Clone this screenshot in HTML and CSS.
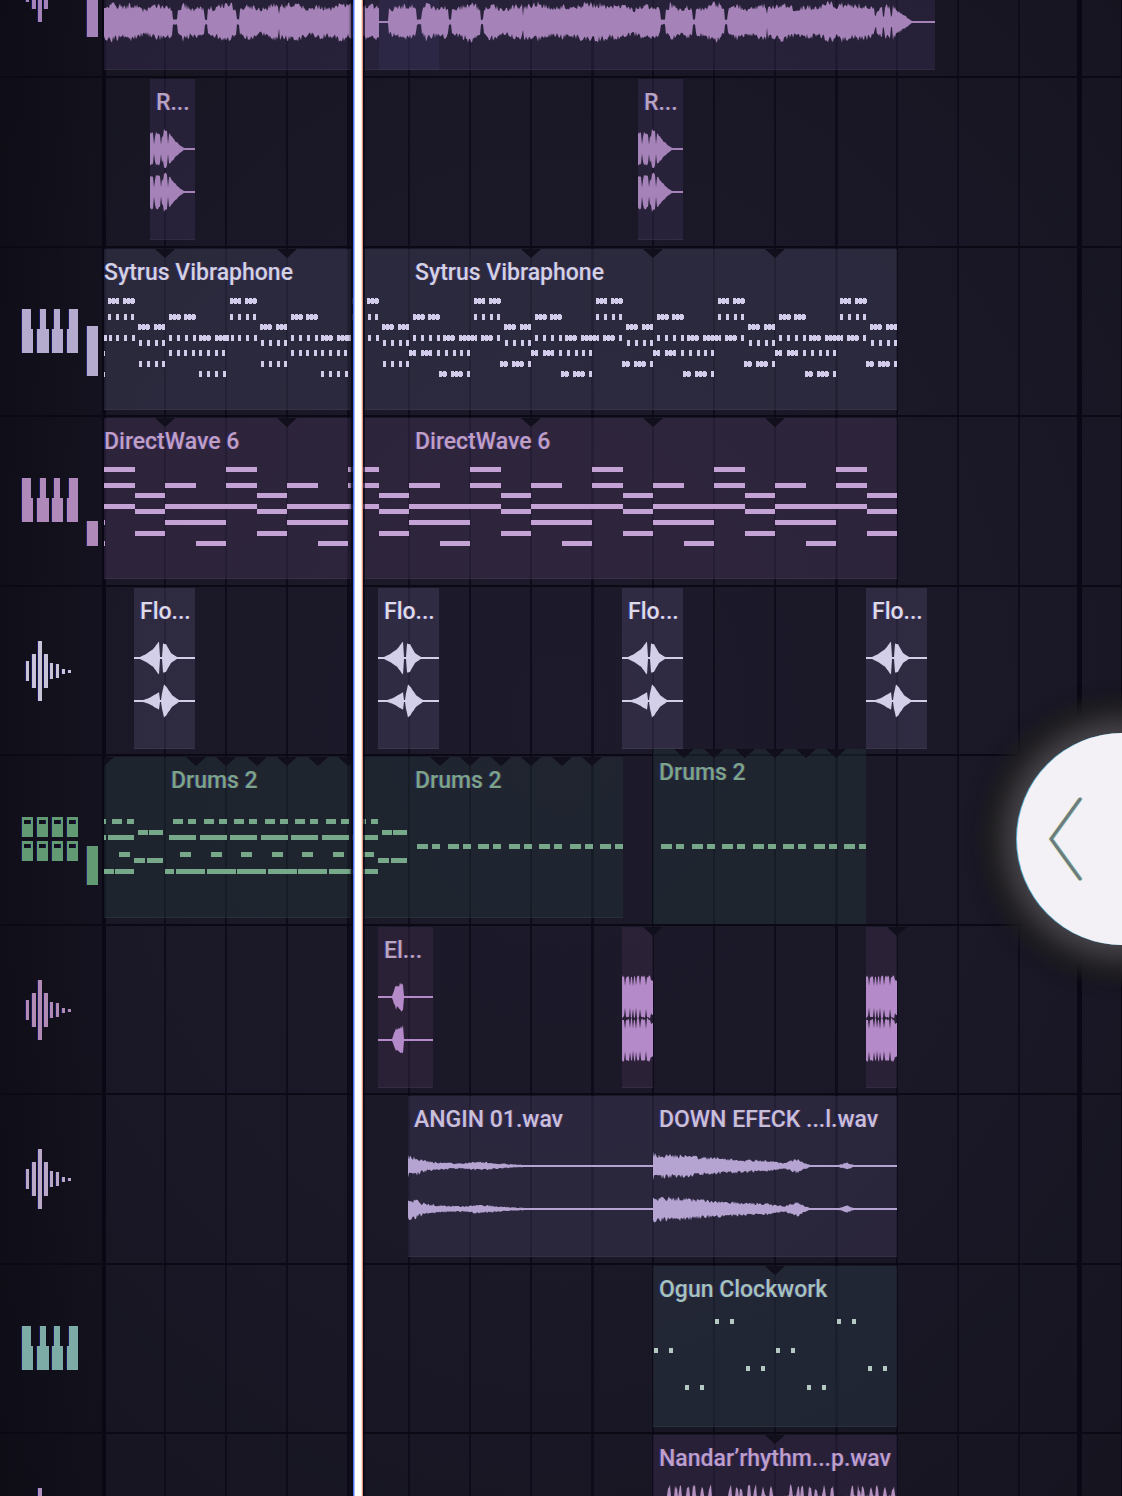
FILE: index.html
```html
<!DOCTYPE html>
<html lang="en">
<head>
<meta charset="utf-8">
<meta name="viewport" content="width=device-width, initial-scale=1">
<title>Playlist</title>
<link rel="stylesheet" href="styles.css">
</head>
<body>
<svg class="defs" aria-hidden="true">
  <symbol id="icon-keys" viewBox="0 0 56 44">
    <path d="M0 0h9v20h2v24H0zM18 0h6v20h3v24H15V20h3zM32 0h6v20h3v24H30V20h2zM47 0h9v44H45V20h2z"/>
  </symbol>
  <symbol id="icon-wave" viewBox="0 0 56 60">
    <path d="M4 20h3v20H4zM10 13h4v34h-4zM16 0h4v60h-4zM22 13h4v34h-4zM28 22h3v16h-3zM34 23h3v14h-3zM40 28h3v5h-3zM46 29h3v3h-3z"/>
  </symbol>
  <symbol id="icon-pads" viewBox="0 0 56 44">
    <path fill-rule="evenodd" d="M0 0h11v20H0zm2 3v4h7V3zM15 0h11v20H15zm2 3v4h7V3zM30 0h11v20H30zm2 3v4h7V3zM45 0h11v20H45zm2 3v4h7V3zM0 24h11v20H0zm2 3v4h7v-4zM15 24h11v20H15zm2 3v4h7v-4zM30 24h11v20H30zm2 3v4h7v-4zM45 24h11v20H45zm2 3v4h7v-4z"/>
  </symbol>
</svg>
<main class="viewport">
  <div class="playlist">
    <section class="track tone-lilac">
      <header class="track-head"><svg class="icon icon-tall"><use href="#icon-wave"/></svg><span class="meter" style="height:80px"></span></header>
      <div class="lane">
        <span class="fade" style="left:277px;width:60px"></span>
        <article class="clip" style="left:2px;width:275px"><svg class="data" data-wave="vocal"></svg></article>
        <article class="clip" style="left:277px;width:556px"><svg class="data" data-wave="vocalTail"></svg></article>
      </div>
    </section>

    <section class="track tone-lilac">
      <header class="track-head"></header>
      <div class="lane">
        <article class="clip" style="left:48px;width:45px"><h2 class="label">R...</h2><svg class="data" data-wave="riser"></svg></article>
        <article class="clip" style="left:536px;width:45px"><h2 class="label">R...</h2><svg class="data" data-wave="riser"></svg></article>
      </div>
    </section>

    <section class="track tone-silver">
      <header class="track-head"><svg class="icon"><use href="#icon-keys"/></svg><span class="meter" style="height:50px"></span></header>
      <div class="lane">
        <article class="clip flush" style="left:2px;width:305px"><h2 class="label">Sytrus Vibraphone</h2><svg class="data" data-notes="vibraphoneIntro" data-cuts="61,183"></svg></article>
        <article class="clip" style="left:307px;width:488px"><h2 class="label">Sytrus Vibraphone</h2><svg class="data" data-notes="vibraphone" data-cuts="122,244,366"></svg></article>
      </div>
    </section>

    <section class="track tone-orchid">
      <header class="track-head"><svg class="icon"><use href="#icon-keys"/></svg><span class="meter" style="height:25px"></span></header>
      <div class="lane">
        <article class="clip flush" style="left:2px;width:305px"><h2 class="label">DirectWave 6</h2><svg class="data" data-notes="directwave" data-shift="0" data-cuts="61,183"></svg></article>
        <article class="clip" style="left:307px;width:488px"><h2 class="label">DirectWave 6</h2><svg class="data" data-notes="directwave" data-shift="61" data-cuts="122,244,366"></svg></article>
      </div>
    </section>

    <section class="track tone-white">
      <header class="track-head"><svg class="icon icon-tall"><use href="#icon-wave"/></svg></header>
      <div class="lane">
        <article class="clip" style="left:32px;width:61px"><h2 class="label">Flo...</h2><svg class="data" data-wave="floor"></svg></article>
        <article class="clip" style="left:276px;width:61px"><h2 class="label">Flo...</h2><svg class="data" data-wave="floor"></svg></article>
        <article class="clip" style="left:520px;width:61px"><h2 class="label">Flo...</h2><svg class="data" data-wave="floor"></svg></article>
        <article class="clip" style="left:764px;width:61px"><h2 class="label">Flo...</h2><svg class="data" data-wave="floor"></svg></article>
      </div>
    </section>

    <section class="track tone-green">
      <header class="track-head"><svg class="icon"><use href="#icon-pads"/></svg><span class="meter" style="height:39px"></span></header>
      <div class="lane">
        <article class="clip" style="left:2px;width:30px"><svg class="data" data-notes="drumsHead" data-cuts="0"></svg></article>
        <article class="clip" style="left:32px;width:31px"><svg class="data" data-notes="drumsFill"></svg></article>
        <article class="clip" style="left:63px;width:213px"><h2 class="label">Drums 2</h2><svg class="data" data-notes="drums" data-cuts="31,61,92,122,153,183"></svg></article>
        <article class="clip" style="left:276px;width:31px"><svg class="data" data-notes="drumsFill"></svg></article>
        <article class="clip" style="left:307px;width:214px"><h2 class="label">Drums 2</h2><svg class="data" data-notes="hats" data-cuts="31,61,92,122,153,183"></svg></article>
        <article class="clip lifted" style="left:551px;width:213px"><h2 class="label">Drums 2</h2><svg class="data" data-notes="hatsLifted" data-cuts="31,61,92,122,153,183"></svg></article>
      </div>
    </section>

    <section class="track tone-plum">
      <header class="track-head"><svg class="icon icon-tall"><use href="#icon-wave"/></svg></header>
      <div class="lane">
        <article class="clip" style="left:276px;width:55px"><h2 class="label">El...</h2><svg class="data" data-wave="electro"></svg></article>
        <article class="clip" style="left:520px;width:31px"><svg class="data cut-over" data-wave="solid" data-cuts="31"></svg></article>
        <article class="clip" style="left:764px;width:31px"><svg class="data cut-over" data-wave="solid" data-cuts="31"></svg></article>
      </div>
    </section>

    <section class="track tone-lavender">
      <header class="track-head"><svg class="icon icon-tall"><use href="#icon-wave"/></svg></header>
      <div class="lane">
        <article class="clip" style="left:306px;width:245px"><h2 class="label">ANGIN 01.wav</h2><svg class="data" data-wave="wind"></svg></article>
        <article class="clip" style="left:551px;width:244px"><h2 class="label">DOWN EFECK ...l.wav</h2><svg class="data" data-wave="down"></svg></article>
      </div>
    </section>

    <section class="track tone-teal">
      <header class="track-head"><svg class="icon"><use href="#icon-keys"/></svg></header>
      <div class="lane">
        <article class="clip" style="left:551px;width:244px"><h2 class="label">Ogun Clockwork</h2><svg class="data" data-notes="clockwork" data-cuts="122"></svg></article>
      </div>
    </section>

    <section class="track tone-violet">
      <header class="track-head"><svg class="icon icon-tall"><use href="#icon-wave"/></svg></header>
      <div class="lane">
        <article class="clip" style="left:551px;width:244px"><h2 class="label">Nandar’rhythm...p.wav</h2><svg class="data" data-wave="rhythm" data-cuts="122"></svg></article>
      </div>
    </section>
  </div>
  <div class="playhead"></div>
  <button class="drawer" type="button" aria-label="Open side panel">
    <svg class="chevron" viewBox="0 0 36 84" aria-hidden="true">
      <path class="fringe-warm" d="M31 2 2 42l29 40"/>
      <path class="fringe-cool" d="M33 2 4 42l29 40"/>
      <path d="M32 2 3 42l29 40"/>
    </svg>
  </button>
</main>
<script src="playlist.js"></script>
</body>
</html>
```
FILE: styles.css
```css
* { box-sizing: border-box; }

body {
  margin: 0;
  background: #14131d;
  font-family: Roboto, "Liberation Sans", sans-serif;
}

.defs { position: absolute; width: 0; height: 0; }

.viewport {
  position: relative;
  height: 100vh;
  overflow: hidden;
  background: radial-gradient(ellipse 75% 70% at 50% 48%, #1d1a2b 0%, #1a1827 55%, #15141f 100%);
}

/* The list is scrolled part of the way through its first track. */
.playlist { margin-top: -94px; }

.track {
  display: grid;
  grid-template-columns: 102px 1fr;
  height: 170px;
}
.track:nth-child(odd):not(:first-child) { height: 169px; }

.track-head {
  display: flex;
  align-items: flex-start;
  justify-content: space-between;
  padding: 0 4px 0 22px;
  background: linear-gradient(to right, rgba(10, 9, 17, 0.6), rgba(14, 13, 22, 0.5));
  border-top: 2px solid #0a0914;
  height: 100%;
}

.icon {
  width: 56px;
  height: 44px;
  margin-top: 61px;
  fill: currentColor;
  filter: drop-shadow(-1px 0 rgba(40, 50, 220, 0.35));
}
.icon-tall { height: 60px; margin-top: 54px; }

/* Level bars stand on a common base line 131px down the track. */
.meter {
  width: 11px;
  align-self: flex-end;
  margin-bottom: 39px;
  background: currentColor;
  box-shadow: -1px 0 rgba(60, 70, 230, 0.4);
}

.lane {
  --line: #0e0c1a;
  position: relative;
  border-top: 2px solid #0a0914;
  background:
    repeating-linear-gradient(to right, #090814 0 5px, transparent 5px 976px) -1px 0,
    repeating-linear-gradient(to right, var(--line) 0 3px, transparent 3px 244px) 1px 0,
    repeating-linear-gradient(to right, var(--line) 0 2px, transparent 2px 61px) 1px 0;
}

.clip {
  position: absolute;
  top: 1px;
  height: 161px;
  background: var(--fill);
  border-bottom: 1px solid rgba(255, 255, 255, 0.05);
}
.clip.lifted { top: -7px; height: 177px; }
.fade {
  position: absolute;
  top: 1px;
  height: 161px;
  background: rgba(90, 80, 160, 0.16);
}

.label {
  position: relative;
  z-index: 1;
  margin: 0 0 0 6px;
  padding-top: 10px;
  font-size: 23px;
  font-weight: 500;
  line-height: 28px;
  white-space: nowrap;
  color: var(--ink);
  text-shadow: -1px 0 rgba(50, 60, 240, 0.4), 1px 0 rgba(230, 110, 90, 0.2);
}
.flush .label { margin-left: 0; }

.data {
  position: absolute;
  inset: 0;
  width: 100%;
  height: 100%;
  overflow: hidden;
  fill: currentColor;
}
.data.cut-over { overflow: visible; }
.data .cut { fill: #110f1b; }

.tone-lilac    { color: #a583b8; --ink: #b8a4c1; --fill: rgba(68, 54, 98, 0.34); }
.tone-silver   { color: #b5abcf; --ink: #d3d1e2; --fill: rgba(72, 70, 98, 0.38); }
.tone-silver .data { color: #d2cbe9; }
.tone-orchid   { color: #ae89b9; --ink: #bf9fc6; --fill: rgba(76, 58, 92, 0.38); }
.tone-orchid .data { color: #c4a2d6; }
.tone-white    { color: #c8c3d6; --ink: #dddbe8; --fill: rgba(82, 76, 110, 0.36); }
.tone-white .data { color: #d3cfe8; }
.tone-green    { color: #629a74; --ink: #7ba489; --fill: rgba(38, 55, 58, 0.4); }
.tone-green .data { color: #76a889; }
.tone-plum     { color: #b18bb4; --ink: #b9a5c0; --fill: rgba(74, 54, 86, 0.32); }
.tone-plum .data { color: #b58ac8; }
.tone-lavender { color: #b9a8c6; --ink: #cabfd9; --fill: rgba(72, 65, 100, 0.36); }
.tone-lavender .data { color: #b5a4d2; }
.tone-teal     { color: #7caca5; --ink: #a5c3bd; --fill: rgba(46, 60, 74, 0.42); }
.tone-teal .data { color: #b3c9c1; }
.tone-violet   { color: #b391bf; --ink: #bd9fca; --fill: rgba(70, 50, 88, 0.36); }

.playhead {
  position: absolute;
  z-index: 2;
  top: 0;
  bottom: 0;
  left: 353px;
  width: 10px;
  background: linear-gradient(to right, #4b74f5 0 1px, #fff 2px 8px, #f6c6a4 9px, #d06058 10px);
  box-shadow: 0 0 0 2px rgba(7, 5, 20, 0.7), -3px 0 2px rgba(7, 5, 20, 0.5);
}

.drawer {
  position: absolute;
  z-index: 3;
  top: 56%;
  right: -107px;
  width: 212px;
  height: 212px;
  margin-top: -105px;
  padding: 0 0 0 31px;
  display: flex;
  align-items: center;
  border: 0;
  border-radius: 50%;
  background: #f4f1f6;
  color: #6d7a7e;
  box-shadow:
    -1px 0 #58b4dc,
    0 0 30px 12px #4e4b52,
    0 0 16px 36px #1a191b;
}
.chevron {
  width: 36px;
  height: 84px;
  fill: none;
  stroke: currentColor;
  stroke-width: 3;
  stroke-linecap: round;
}
.fringe-warm { stroke: #f0dc9a; }
.fringe-cool { stroke: #7fd0dc; }
```
FILE: playlist.js
```js
// Clip contents: note bars for pattern clips, mirrored envelopes for audio clips.
// All values are in pixels from the clip's top left corner.

const NS = 'http://www.w3.org/2000/svg';

function rect(x, y, w, h) {
  return `M${x} ${y}h${w}v${h}h${-w}z`;
}

function bars(y, list, h = 5) {
  return list.map(([x, w]) => rect(x, y - 2, w, h)).join('');
}

// A chunk is a run of very short notes that almost touch.
function chunk(y, x, w) {
  let d = rect(x, y - 1, w, 4);
  for (let i = 0; i < w; i += 4) d += rect(x + i, y - 2, Math.min(3, w - i), 6);
  return d;
}
const dots = (y, xs) => xs.map(x => rect(x, y - 2, 3, 6)).join('');

function vibraphone(first, last, dense) {
  let d = '';
  for (let p = first; p < last; p += 122) {
    d += chunk(51, p + 4, 11) + chunk(51, p + 19, 12);
    d += dots(67, [p + 4, p + 12, p + 20, p + 27]);
    d += chunk(67, p + 65, 12) + chunk(67, p + 80, 12);
    d += chunk(77, p + 34, 12) + chunk(77, p + 50, 11);
    d += dots(93, [p + 35, p + 43, p + 51, p + 58]);
    d += dots(88, [p + 65, p + 73, p + 81, p + 89]);
    d += chunk(88, p + 95, 12);
    if (dense) {
      d += chunk(88, p + 111, 18) + chunk(88, p + 133, 12) + dots(88, [p + 149]);
      d += chunk(103, p + 61, 7) + chunk(103, p + 73, 11);
      d += dots(103, [p + 89, p + 97, p + 105, p + 112, p + 119]);
      d += chunk(114, p + 30, 8) + chunk(114, p + 42, 12) + dots(114, [p + 58]);
      d += chunk(124, p + 91, 8) + chunk(124, p + 103, 12) + dots(124, [p + 119]);
    } else {
      d += dots(88, [p, p + 5, p + 12, p + 20, p + 28]) + chunk(88, p + 111, 13);
      for (let i = 0; i < 8; i++) d += dots(103, [p + 65 + Math.round(i * 7.6)]);
      d += dots(114, [p + 35, p + 43, p + 51, p + 58]);
      d += dots(124, [p + 95, p + 103, p + 111, p + 119]);
    }
  }
  return d;
}

function directwave(width, shift) {
  let d = '';
  for (let p = -shift; p < width; p += 122) {
    d += bars(51, [[p, 31]]);
    d += bars(67, [[p, 31], [p + 61, 31]]);
    d += bars(77, [[p + 31, 30]]);
    d += bars(88, [[p, 31], [p + 61, 61]]);
    d += bars(93, [[p + 31, 30]]);
    d += bars(104, [[p + 61, 61]]);
    d += bars(115, [[p + 31, 30]]);
    d += bars(125, [[p + 92, 30]]);
  }
  return d;
}

function drums() {
  let d = bars(114, [[0, 9]]);
  for (let i = 0; i < 7; i++) {
    const p = Math.round(i * 30.5);
    d += bars(64, [[p + 8, 10], [p + 23, 8]]);
    d += bars(80, [[p + 4, 27]]);
    d += bars(97, [[p + 15, 11]]);
    d += bars(114, [[p + 11, 29]]);
  }
  return d;
}

function hats(y) {
  let d = '';
  for (let i = 0; i < 7; i++) {
    const p = Math.round(i * 30.5);
    d += bars(y, [[p + 8, 11], [p + 23, 8]]);
  }
  return d;
}

const NOTES = {
  vibraphoneIntro: () => vibraphone(0, 305, false) + rect(0, 102, 1, 5) + rect(0, 123, 1, 5),
  vibraphone: () => vibraphone(-61, 488, true),
  directwave: (w, shift) => directwave(w, shift) + (shift ? '' : rect(0, 102, 1, 5) + rect(0, 123, 1, 5)),
  drumsHead: () => bars(64, [[0, 2], [8, 10], [23, 7]]) + bars(80, [[0, 2], [4, 26]]) +
    bars(97, [[15, 11]]) + bars(114, [[0, 10], [11, 19]]),
  drumsFill: () => bars(75, [[4, 10], [15, 14]]) + bars(103, [[0, 11], [13, 16]]),
  drums,
  hats: () => hats(89),
  hatsLifted: () => hats(97),
  clockwork: () => {
    let d = '';
    for (const p of [0, 122]) {
      for (const [x, y] of [[0, 82], [31, 119], [61, 53], [92, 100]]) {
        d += rect(p + x + 1, y, 4, 5) + rect(p + x + 16, y, 4, 5);
      }
    }
    return d;
  }
};

// Repeatable noise between 0 and 1.
function noise(n) {
  const v = Math.sin(n * 127.1 + 11.7) * 43758.5453;
  return v - Math.floor(v);
}

// Linear interpolation through [x, height] points.
function envelope(points, x) {
  for (let i = 1; i < points.length; i++) {
    const [x1, h1] = points[i];
    const [x0, h0] = points[i - 1];
    if (x <= x1) return h0 + (h1 - h0) * ((x - x0) / Math.max(1, x1 - x0));
  }
  return 0;
}

function wave(width, mid, height, grit, seed) {
  let top = '';
  let low = '';
  for (let x = 0; x <= width; x++) {
    const h = Math.max(0, height(x));
    const up = Math.max(1, h * (1 - grit * noise(x + seed)));
    const down = Math.max(1, h * (1 - grit * noise(x + seed + 500)));
    top += `L${x} ${(mid - up).toFixed(1)}`;
    low = `L${x} ${(mid + down).toFixed(1)}` + low;
  }
  return `M0 ${mid}${top}${low}z`;
}

function vocal(x) {
  const p = x % 244;
  const gaps = [[71, 2], [102, 1], [134, 1]];
  for (const [at, half] of gaps) {
    const d = Math.abs(p - at);
    if (d <= half) return 3;
    if (d < half + 5) return 13 + d - half;
  }
  if (p === 175) return 8;
  return 18 + 2 * Math.sin(p / 9) + 1.5 * Math.sin(p / 3.7);
}

const RISER = [[0, 17], [2, 18], [5, 14], [6, 18], [9, 17], [13, 13], [14, 21], [20, 16], [25, 9], [30, 4], [34, 1], [46, 1]];
const FLOOR_L = [[0, 1], [6, 1], [12, 4], [19, 9], [25, 17], [26, 1], [28, 1], [29, 15], [32, 14], [37, 5], [43, 1], [61, 1]];
const FLOOR_R = [[0, 1], [9, 1], [15, 3], [25, 9], [26, 1], [27, 1], [28, 8], [30, 17], [32, 15], [38, 6], [45, 1], [61, 1]];
const ELECTRO = [[0, 1], [14, 1], [16, 7], [18, 13], [20, 12], [22, 15], [25, 15], [26, 1], [55, 1]];
const WIND = [[0, 12], [7, 11], [14, 7], [30, 4], [55, 3], [72, 5], [90, 3], [120, 1], [245, 1]];
const DOWN = [[0, 15], [4, 13], [30, 12], [60, 9], [90, 7], [115, 6], [132, 3], [138, 6], [145, 8], [150, 4], [158, 1], [185, 1], [194, 4], [201, 1], [244, 1]];

const WAVES = {
  vocal: { l: vocal, grit: 0.34 },
  vocalTail: {
    l: x => x < 10 ? 1 : x > 534 ? 1 : x > 516 ? (534 - x) * 0.9 : x > 493 && x % 8 < 2 ? 7 : vocal(x + 31 + 244),
    grit: 0.34
  },
  riser: { l: x => x < 22 && x % 7 === 4 ? 5 : envelope(RISER, x), grit: 0.15 },
  floor: { l: x => envelope(FLOOR_L, x), r: x => envelope(FLOOR_R, x), grit: 0.05 },
  electro: { l: x => envelope(ELECTRO, x), grit: 0.25 },
  solid: { l: x => [3, 8, 11, 14, 18, 24].includes(x) ? 12 : 22 - (x > 28 ? 4 : 0), grit: 0.12 },
  wind: { l: x => envelope(WIND, x), grit: 0.45 },
  down: { l: x => envelope(DOWN, x), grit: 0.38 },
  rhythm: {
    l: x => {
      const p = x % 61;
      if (p < 10) return 8;
      const beat = [16, 23, 27, 35, 41, 49, 57].some(b => Math.abs(p - b) < 2);
      return beat ? 21 : 10;
    },
    grit: 0.35
  }
};

function addPath(svg, d, name) {
  const path = document.createElementNS(NS, 'path');
  path.setAttribute('d', d);
  if (name) path.setAttribute('class', name);
  svg.append(path);
}

document.querySelectorAll('.data').forEach(svg => {
  const width = parseInt(svg.parentElement.style.width, 10);
  const { notes, wave: kind, cuts, shift } = svg.dataset;
  if (notes) addPath(svg, NOTES[notes](width, Number(shift || 0)));
  if (kind) {
    const w = WAVES[kind];
    addPath(svg, wave(width, 70, w.l, w.grit, 3));
    addPath(svg, wave(width, 113, w.r || w.l, w.grit, 90));
  }
  // Loop points are notched into the clip's top edge.
  if (cuts) {
    addPath(svg, cuts.split(',').map(x => `M${x - 10} 0h20l-10 9z`).join(''), 'cut');
  }
});
```
